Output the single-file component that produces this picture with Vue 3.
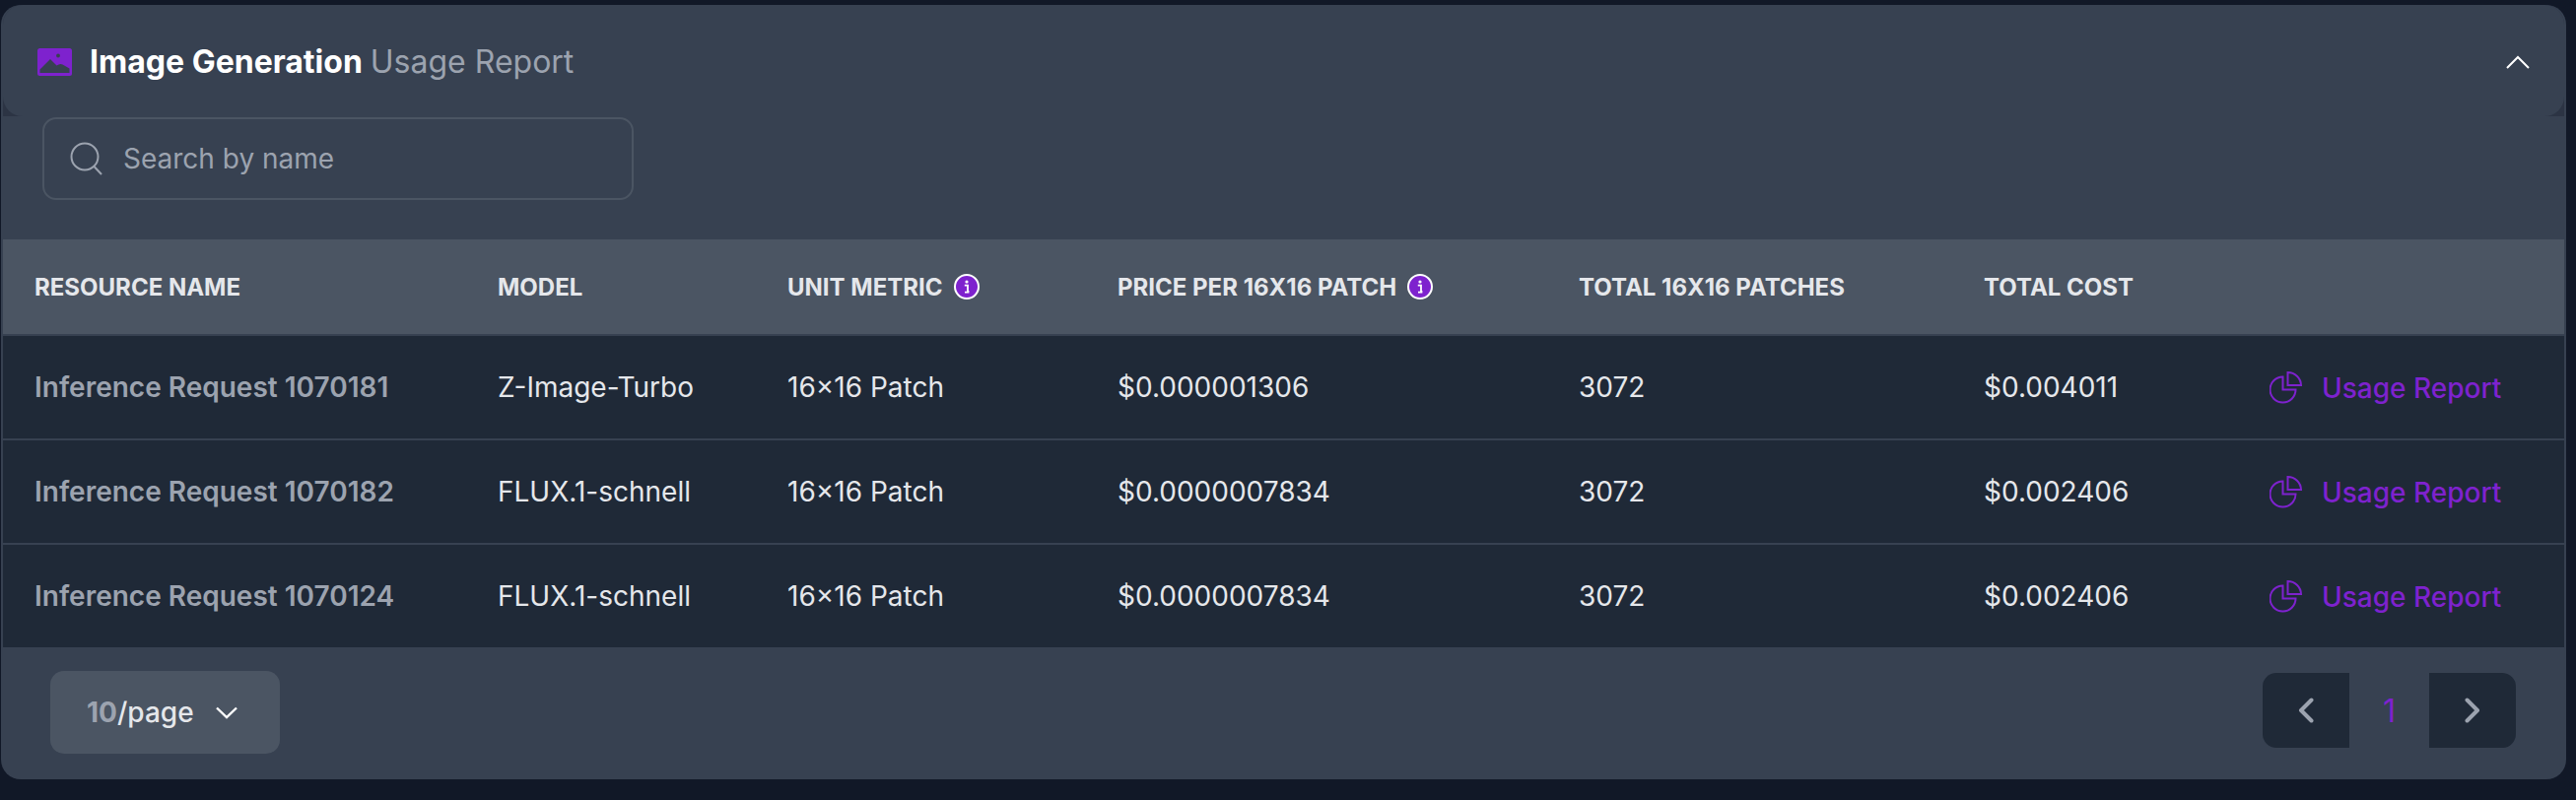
<script setup>
const columns = [
  { label: 'Resource Name' },
  { label: 'Model' },
  { label: 'Unit Metric', info: true },
  { label: 'Price per 16x16 Patch', info: true },
  { label: 'Total 16x16 Patches' },
  { label: 'Total Cost' },
  { label: '' },
]

const rows = [
  { name: 'Inference Request 1070181', model: 'Z-Image-Turbo', unit: '16×16 Patch', price: '$0.000001306', total: '3072', cost: '$0.004011' },
  { name: 'Inference Request 1070182', model: 'FLUX.1-schnell', unit: '16×16 Patch', price: '$0.0000007834', total: '3072', cost: '$0.002406' },
  { name: 'Inference Request 1070124', model: 'FLUX.1-schnell', unit: '16×16 Patch', price: '$0.0000007834', total: '3072', cost: '$0.002406' },
]
</script>

<template>
  <div class="page">
    <section class="card">
      <div class="head-wrap">
        <header class="head">
          <div class="title">
            <svg class="title-icon" viewBox="0 0 35 28">
              <rect width="35" height="28" rx="2.5" fill="#7e22ce" />
              <circle cx="21" cy="7.5" r="1.9" fill="#374151" />
              <path d="M2.5 25 V21.5 L13 11 L19.5 17.5 Q23 15 25.5 16.5 L32.5 20.5 V25 Z" fill="#374151" />
            </svg>
            <strong>Image Generation</strong>
            <span>Usage Report</span>
          </div>
          <svg class="collapse" viewBox="0 0 24 14" fill="none" stroke="#fff" stroke-width="2">
            <path d="M1 13 L12 2 L23 13" />
          </svg>
        </header>
      </div>

      <div class="search-bar">
        <label class="search">
          <svg class="search-icon" viewBox="0 0 34 34" fill="none" stroke="#9ca3af" stroke-width="2">
            <circle cx="15" cy="15" r="13.5" />
            <path d="M24.5 25 L32 33" />
          </svg>
          <input type="text" placeholder="Search by name" />
        </label>
      </div>

      <table class="table">
        <colgroup>
          <col style="width: 469px" />
          <col style="width: 294px" />
          <col style="width: 335px" />
          <col style="width: 468px" />
          <col style="width: 411px" />
          <col style="width: 281px" />
          <col />
        </colgroup>
        <thead>
          <tr>
            <th v-for="col in columns" :key="col.label">
              <span class="th-inner">
                {{ col.label }}
                <svg v-if="col.info" class="info" viewBox="0 0 26 26">
                  <circle cx="13" cy="13" r="12" fill="#7e22ce" stroke="#fff" stroke-width="2" />
                  <circle cx="13" cy="8" r="1.6" fill="#fff" />
                  <path d="M10.8 11.6 H14 V18 H15.4 M11 18.6 H15.4" fill="none" stroke="#fff" stroke-width="1.8" />
                </svg>
              </span>
            </th>
          </tr>
        </thead>
        <tbody>
          <tr v-for="row in rows" :key="row.name">
            <td class="name">{{ row.name }}</td>
            <td>{{ row.model }}</td>
            <td>{{ row.unit }}</td>
            <td>{{ row.price }}</td>
            <td>{{ row.total }}</td>
            <td>{{ row.cost }}</td>
            <td class="action">
              <a class="usage">
                <svg class="pie" viewBox="0 0 33 33" fill="none" stroke="#7e22ce" stroke-width="2">
                  <path d="M13.5 5.5 A13 13 0 1 0 26.5 18.5 H13.5 Z" />
                  <path d="M18.5 1 A13.5 13.5 0 0 1 32 14 H18.5 Z" />
                </svg>
                Usage Report
              </a>
            </td>
          </tr>
        </tbody>
      </table>

      <footer class="foot">
        <button class="page-size">
          <span><span class="muted">10</span>/page</span>
          <svg class="size-caret" viewBox="0 0 22 13" fill="none" stroke="#fff" stroke-width="2.4">
            <path d="M1 1.5 L11 11 L21 1.5" />
          </svg>
        </button>
        <nav class="pager">
          <button class="nav prev">
            <svg viewBox="0 0 16 26" fill="none" stroke="#9ca3af" stroke-width="4" stroke-linecap="round" stroke-linejoin="round">
              <path d="M13.5 2.5 L3 13 L13.5 23.5" />
            </svg>
          </button>
          <span class="current">1</span>
          <button class="nav next">
            <svg viewBox="0 0 16 26" fill="none" stroke="#9ca3af" stroke-width="4" stroke-linecap="round" stroke-linejoin="round">
              <path d="M2.5 2.5 L13 13 L2.5 23.5" />
            </svg>
          </button>
        </nav>
      </footer>
    </section>
  </div>
</template>

<style>
html,
body {
  margin: 0;
  background: #111827;
}
</style>

<style scoped>
.page {
  width: 2614px;
  height: 812px;
  padding: 5px 10px 0 1px;
  box-sizing: border-box;
  font-family: Inter, "Liberation Sans", sans-serif;
  overflow: hidden;
}

.card {
  background: #374151;
  border-radius: 20px;
  height: 786px;
  padding: 0 2px;
  box-sizing: border-box;
  display: flex;
  flex-direction: column;
}

.head-wrap {
  background: #2c3444;
  height: 113px;
  flex-shrink: 0;
  border-radius: 20px 20px 0 0;
}

.head {
  height: 100%;
  box-sizing: border-box;
  background: #374151;
  border-radius: 20px;
  display: flex;
  align-items: center;
  justify-content: space-between;
  padding: 3px 35px 0 35px;
}

.title {
  display: flex;
  align-items: center;
  font-size: 32px;
  line-height: 40px;
}

.title-icon {
  width: 35px;
  height: 28px;
  margin-right: 18px;
}

.title strong {
  color: #fff;
  font-weight: 700;
  margin-right: 8px;
}

.title span {
  color: #9ca3af;
}

.collapse {
  width: 24px;
  height: 14px;
}

.search-bar {
  height: 125px;
  box-sizing: border-box;
  flex-shrink: 0;
  padding: 1px 0 0 40px;
}

.search {
  width: 600px;
  height: 84px;
  box-sizing: border-box;
  border: 2px solid #4b5563;
  border-radius: 14px;
  display: flex;
  align-items: center;
  padding-left: 26px;
}

.search-icon {
  width: 34px;
  height: 34px;
  margin-right: 20px;
}

.search input {
  background: transparent;
  border: none;
  outline: none;
  padding: 0;
  font: inherit;
  font-size: 28px;
  color: #fff;
  flex: 1;
}

.search input::placeholder {
  color: #9ca3af;
}

.table {
  width: 100%;
  border-collapse: collapse;
  table-layout: fixed;
  flex-shrink: 0;
}

th {
  height: 96px;
  padding: 0 0 0 33px;
  background: #4b5563;
  color: #e5e7eb;
  font-size: 24px;
  font-weight: 700;
  text-align: left;
  text-transform: uppercase;
  border-bottom: 2px solid #374151;
}

th:first-child {
  padding-left: 32px;
}

.th-inner {
  display: inline-flex;
  align-items: center;
  gap: 11px;
  white-space: nowrap;
}

.info {
  width: 26px;
  height: 26px;
}

td {
  height: 104px;
  padding: 0 0 0 33px;
  background: #1f2937;
  color: #e5e7eb;
  font-size: 28px;
  border-bottom: 2px solid #374151;
  white-space: nowrap;
}

tr:last-child td {
  border-bottom: none;
}

td.name {
  color: #9ca3af;
  font-weight: 600;
  padding-left: 32px;
}

td.action {
  padding-left: 42px;
}

.usage {
  display: inline-flex;
  align-items: center;
  gap: 20px;
  color: #7e22ce;
  font-weight: 500;
  vertical-align: middle;
  margin-top: -2px;
}

.pie {
  width: 33px;
  height: 33px;
}

.foot {
  flex: 1;
  display: flex;
  align-items: center;
  justify-content: space-between;
  padding: 0 49px 2px 48px;
}

.page-size {
  width: 233px;
  height: 84px;
  border: none;
  border-radius: 14px;
  background: #4b5563;
  color: #e5e7eb;
  font: inherit;
  font-size: 28px;
  font-weight: 500;
  display: flex;
  align-items: center;
  justify-content: flex-start;
  padding: 0 0 0 37px;
  gap: 22px;
}

.muted {
  color: #9ca3af;
  font-weight: 700;
}

.size-caret {
  width: 22px;
  height: 13px;
}

.pager {
  display: flex;
  align-items: center;
  margin-bottom: 4px;
}

.nav {
  width: 88px;
  height: 76px;
  border: none;
  background: #1f2937;
  display: flex;
  align-items: center;
  justify-content: center;
  padding: 0;
}

.nav svg {
  width: 16px;
  height: 26px;
}

.prev {
  border-radius: 14px 0 0 14px;
}

.next {
  border-radius: 0 14px 14px 0;
}

.current {
  width: 81px;
  text-align: center;
  color: #7e22ce;
  font-size: 32px;
}
</style>
